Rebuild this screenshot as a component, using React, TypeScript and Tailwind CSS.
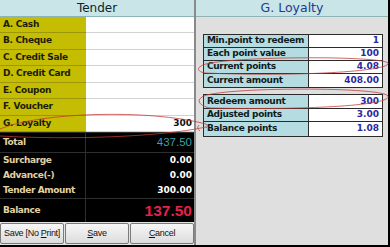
import React from 'react';

const tenders = [
  { label: 'A. Cash', value: '' },
  { label: 'B. Cheque', value: '' },
  { label: 'C. Credit Sale', value: '' },
  { label: 'D. Credit Card', value: '' },
  { label: 'E. Coupon', value: '' },
  { label: 'F. Voucher', value: '' },
  { label: 'G. Loyalty', value: '300' },
];

const pointsTop = [
  { label: 'Min.point to redeem', value: '1' },
  { label: 'Each point value', value: '100' },
  { label: 'Current points', value: '4.08' },
  { label: 'Current amount', value: '408.00' },
];

const pointsBottom = [
  { label: 'Redeem amount', value: '300' },
  { label: 'Adjusted points', value: '3.00' },
  { label: 'Balance points', value: '1.08' },
];

const TenderRow = ({ label, value }: any) => (
  <div className="flex h-[16.8px]">
    <div className="w-[86px] bg-[#c4bd02] border-b border-[#9c9608] pl-[3px] flex items-center text-[9px] font-bold tracking-[-0.3px] text-[#1c1c06]">
      {label}
    </div>
    <div className="flex-1 bg-white border-b border-[#d2d2d2] pr-[2px] flex items-center justify-end text-[9px] font-bold text-[#111]">
      {value}
    </div>
  </div>
);

const DarkRow = ({ label, children, className = '' }: any) => (
  <div className={`flex ${className}`}>
    <div className="w-[86px] border-r border-[#2e2e2e] pl-[3px] flex items-center text-[9px] font-bold tracking-[-0.4px] text-[#e3d2a2]">
      {label}
    </div>
    <div className="flex-1 pr-[2px] flex items-center justify-end">{children}</div>
  </div>
);

const PointsTable = ({ rows, rowClass }: any) => (
  <div className="border border-[#2b2b2b]">
    {rows.map((r: any, i: number) => (
      <div key={r.label} className={`flex ${rowClass} ${i < rows.length - 1 ? 'border-b border-[#2b2b2b]' : ''}`}>
        <div className="w-[105px] bg-[#b5dce0] border-r border-[#2b2b2b] pl-[3px] flex items-center text-[9px] font-bold tracking-[-0.35px] text-[#0f1a20]">
          {r.label}
        </div>
        <div className="flex-1 bg-white pr-[3px] flex items-center justify-end text-[9px] font-bold text-[#2a2a9e]">
          {r.value}
        </div>
      </div>
    ))}
  </div>
);

const Btn = ({ children }: any) => (
  <button className="h-[21px] w-[64px] rounded-[2px] border border-[#7a7a7a] bg-gradient-to-b from-[#f7f7f7] to-[#dcdcdc] text-[9px] tracking-[-0.3px] text-[#111] font-['Liberation_Sans',sans-serif]">
    {children}
  </button>
);

export default function App() {
  return (
    <div className="relative w-[390px] h-[247px] bg-black overflow-hidden font-['DejaVu_Sans',sans-serif]">
      <div className="flex w-[388px] h-[245px]">
        {/* left: tender */}
        <div className="w-[194px] flex flex-col bg-white">
          <div className="h-[17px] bg-[#c9e5e8] border-b border-[#8db3b6] flex items-center justify-center text-[12px] text-[#0c2630]">
            Tender
          </div>
          {tenders.map((t) => (
            <TenderRow key={t.label} {...t} />
          ))}
          <div className="flex-1 flex flex-col bg-black">
            <DarkRow label="Total" className="h-[21px] border-t border-b border-[#2e2e2e]">
              <span className="font-['Liberation_Sans',sans-serif] text-[11.5px] text-[#3f9ea8]">437.50</span>
            </DarkRow>
            <DarkRow label="Surcharge" className="h-[15px]">
              <span className="text-[9px] font-bold text-white">0.00</span>
            </DarkRow>
            <DarkRow label="Advance(-)" className="h-[15px]">
              <span className="text-[9px] font-bold text-white">0.00</span>
            </DarkRow>
            <DarkRow label="Tender Amount" className="h-[16px] border-b border-[#2e2e2e]">
              <span className="text-[9px] font-bold text-white">300.00</span>
            </DarkRow>
            <DarkRow label="Balance" className="flex-1">
              <span className="font-['Liberation_Sans',sans-serif] text-[15.5px] font-bold text-[#e3224c]">137.50</span>
            </DarkRow>
          </div>
          <div className="h-[23px] bg-[#e4e4e4] flex items-center gap-[1px]">
            <Btn>
              Save [No <span className="underline">P</span>rint]
            </Btn>
            <Btn>
              <span className="underline">S</span>ave
            </Btn>
            <Btn>
              <span className="underline">C</span>ancel
            </Btn>
          </div>
        </div>
        <div className="w-[2px] bg-[#8a8a8a]" />
        {/* right: loyalty */}
        <div className="flex-1 flex flex-col bg-[#dfdfdf]">
          <div className="h-[17px] bg-[#c9e5e8] border-b border-[#8db3b6] flex items-center justify-center text-[12.5px] text-[#1b3b8f]">
            G. Loyalty
          </div>
          <div className="pl-[7px] pr-[5px] pt-[17px] flex flex-col gap-[6px]">
            <PointsTable rows={pointsTop} rowClass="h-[13px]" />
            <PointsTable rows={pointsBottom} rowClass="h-[13.5px]" />
          </div>
        </div>
      </div>

      {/* red marker annotations */}
      <svg className="absolute inset-0 pointer-events-none" width="390" height="247" viewBox="0 0 390 247" fill="none">
        <g stroke="#c23a36" strokeWidth="0.9" opacity="0.85">
          <path d="M0 129 C40 112 150 109 206 124" />
          <path d="M0 136 C70 140 160 137 206 127" />
          <path d="M206 124 Q209 126 206 128" />
          <path d="M199 125 Q196 128 200 131" />
          <path d="M200 67 C204 56 380 55 388 63 C392 71 300 77 205 73 C198 72 197 68 200 67" />
          <path d="M201 98 C205 87 382 86 388 96 C392 106 300 110 210 108 C199 106 197 100 201 98" />
        </g>
      </svg>
    </div>
  );
}
